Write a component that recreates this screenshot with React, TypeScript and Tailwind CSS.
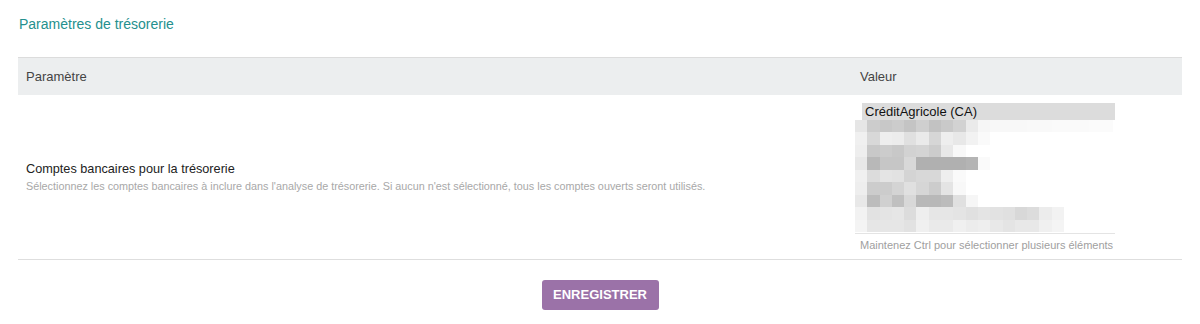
const blur: number[][] = [
  [0xe6, 0xcc, 0xc8, 0xcc, 0xc4, 0xcf, 0xc2, 0xc9, 0xd2, 0xea, 0xf6, 0xf8, 0xf8, 0xf8, 0xf9, 0xf9, 0xfa, 0xfa, 0xfa, 0xfb, 0xfb],
  [0xf0, 0xd8, 0xee, 0xec, 0xe0, 0xea, 0xd6, 0xee, 0xe8, 0xf2, 0xfa],
  [0xee, 0xc8, 0xcc, 0xc8, 0xd2, 0xd4, 0xcc, 0xe8, 0xf8],
  [0xe8, 0xb8, 0xc6, 0xc6, 0xd8, 0xb0, 0xb0, 0xb0, 0xb0, 0xb4, 0xfa],
  [0xf0, 0xdc, 0xe4, 0xe2, 0xd4, 0xd8, 0xd8, 0xee, 0xfa],
  [0xee, 0xcc, 0xcc, 0xd4, 0xe0, 0xd6, 0xcc, 0xe4, 0xf8],
  [0xe8, 0xbc, 0xd0, 0xc0, 0xd8, 0xb8, 0xb8, 0xbc, 0xe0, 0xf6],
  [0xf2, 0xe2, 0xe4, 0xe6, 0xdc, 0xee, 0xe6, 0xe6, 0xe4, 0xe0, 0xe4, 0xe2, 0xe0, 0xd8, 0xdc, 0xec, 0xf2],
  [0xf4, 0xe6, 0xe6, 0xe6, 0xe2, 0xf0, 0xea, 0xea, 0xf0, 0xec, 0xee, 0xe8, 0xe4, 0xe8, 0xe8, 0xf0, 0xf4],
]

function gray(v: number) {
  const h = v.toString(16)
  return `#${h}${h}${h}`
}

function BankSelect() {
  return (
    <div className="w-[260px]">
      <div className="border-b border-[#e4e4e4] pb-[1px]">
        <div className="ml-[7px] h-[17px] bg-[#dcdcdc] pl-[3px] text-[13px] leading-[17px] text-[#111]">
          CréditAgricole (CA)
        </div>
        {/* comptes masqués */}
        <div className="flex flex-col">
          {blur.map((row, i) => (
            <div key={i} className="flex h-[12.5px]">
              {row.map((v, j) => (
                <div key={j} className="h-full w-[12.3px] shrink-0" style={{ backgroundColor: gray(v) }} />
              ))}
            </div>
          ))}
        </div>
      </div>
      <div className="mt-[5px] pl-[5px] text-[11px] leading-[13px] text-[#a0a0a0]">
        Maintenez Ctrl pour sélectionner plusieurs éléments
      </div>
    </div>
  )
}

export default function App() {
  return (
    <div className="min-h-[324px] bg-white px-[18px] pt-[16px] font-['Liberation_Sans',Arial,sans-serif]">
      <h2 className="text-[14px] leading-[17px] text-[#24908e] pl-[1px]">Paramètres de trésorerie</h2>

      <table className="mt-[24px] w-full border-collapse text-left">
        <thead>
          <tr className="bg-[#eceeef] border-t border-[#dcdcdc]">
            <th className="h-[37px] px-[8px] text-[13px] font-normal text-[#444]">Paramètre</th>
            <th className="w-[330px] px-[8px] text-[13px] font-normal text-[#444]">Valeur</th>
          </tr>
        </thead>
        <tbody>
          <tr className="border-b border-[#dedede]">
            <td className="px-[8px] align-middle">
              <div className="text-[12.7px] leading-[17px] text-[#222]">Comptes bancaires pour la trésorerie</div>
              <div className="mt-[2px] text-[10.8px] leading-[13px] text-[#a8a8a8]">
                Sélectionnez les comptes bancaires à inclure dans l'analyse de trésorerie. Si aucun n'est sélectionné, tous les comptes ouverts seront utilisés.
              </div>
            </td>
            <td className="pl-[3px] pt-[8px] pb-[7px] align-top">
              <BankSelect />
            </td>
          </tr>
        </tbody>
      </table>

      <div className="flex justify-center pt-[20px]">
        <button className="h-[30px] w-[117px] rounded-[3px] bg-[#9b72a8] text-[13px] font-bold text-white">
          ENREGISTRER
        </button>
      </div>
    </div>
  )
}
